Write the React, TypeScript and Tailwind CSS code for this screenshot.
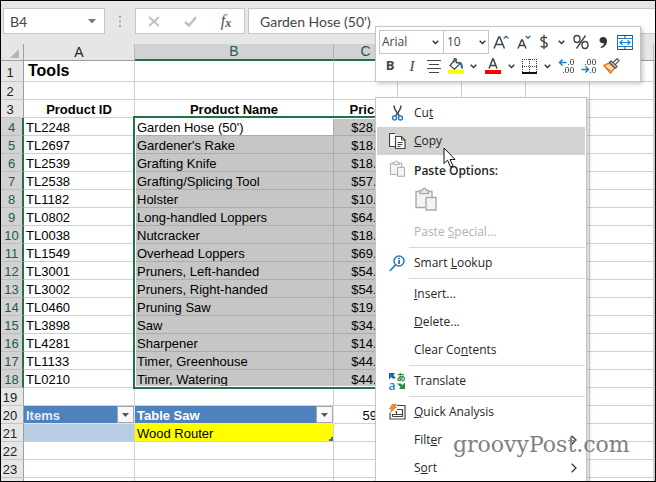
import type { ReactNode } from "react";

const products: [string, string, string][] = [
  ["TL2248", "Garden Hose (50')", "$28.00"],
  ["TL2697", "Gardener's Rake", "$18.00"],
  ["TL2539", "Grafting Knife", "$18.00"],
  ["TL2538", "Grafting/Splicing Tool", "$57.00"],
  ["TL1182", "Holster", "$10.00"],
  ["TL0802", "Long-handled Loppers", "$64.00"],
  ["TL0038", "Nutcracker", "$18.00"],
  ["TL1549", "Overhead Loppers", "$69.00"],
  ["TL3001", "Pruners, Left-handed", "$54.00"],
  ["TL3002", "Pruners, Right-handed", "$54.00"],
  ["TL0460", "Pruning Saw", "$19.00"],
  ["TL3898", "Saw", "$34.00"],
  ["TL4281", "Sharpener", "$14.00"],
  ["TL1133", "Timer, Greenhouse", "$44.00"],
  ["TL0210", "Timer, Watering", "$44.00"],
];

const cell = "border-r border-b border-[#d0d0d0] p-0 px-[2px] pt-[2px] whitespace-nowrap overflow-hidden";

function Blank({ count }: { count: number }) {
  return (
    <>
      {Array.from({ length: count }, (_, i) => (
        <td key={i} className={cell} />
      ))}
    </>
  );
}

function RowHead({ n, selected = false }: { n?: number; selected?: boolean }) {
  return (
    <th
      scope="row"
      className={
        selected
          ? "border-r-2 border-b border-r-[#217346] border-b-[#bdbdbd] bg-[#d2d2d2] p-0 pt-[2px] text-center font-normal text-[#215c4a]"
          : "border-r border-b border-r-[#9e9e9e] border-b-[#c4c4c4] bg-[#e6e6e6] p-0 pt-[2px] pr-1 text-center font-normal text-[#222]"
      }
    >
      {n}
    </th>
  );
}

function ColHead({ label, selected = false }: { label: string; selected?: boolean }) {
  return (
    <th
      scope="col"
      className={
        selected
          ? "border-r border-b-2 border-r-[#b0b0b0] border-b-[#217346] bg-[#d2d2d2] p-0 text-center text-[14px] leading-[15px] font-normal text-[#215c4a]"
          : "border-r border-b border-r-[#b8b8b8] border-b-[#9e9e9e] bg-[#e6e6e6] p-0 text-center text-[14px] leading-[15px] font-normal text-[#222]"
      }
    >
      {label}
    </th>
  );
}

function FilterButton({ label }: { label: string }) {
  return (
    <button
      type="button"
      aria-label={label}
      className="flex size-[17px] items-center justify-center border border-[#a6a6a6] bg-[#f8f8f8]"
    >
      <svg width="7" height="4" viewBox="0 0 7 4">
        <path d="M0 0h7L3.5 4z" fill="#555" />
      </svg>
    </button>
  );
}

function Sheet() {
  return (
    <div className="relative">
      <table className="w-full table-fixed border-separate border-spacing-0 text-[13px] leading-[15px] text-black">
        <colgroup>
          <col className="w-[23px]" />
          <col className="w-[111px]" />
          <col className="w-[199px]" />
          <col className="w-[64px]" />
          <col className="w-[64px]" />
          <col className="w-[64px]" />
          <col className="w-[64px]" />
          <col className="w-[64px]" />
          <col />
        </colgroup>
        <thead>
          <tr className="h-[17px]">
            <td className="border-r border-b border-[#9e9e9e] bg-[#e6e6e6] p-0">
              <svg width="19" height="14" viewBox="0 0 19 14">
                <path d="M18 4v9H9z" fill="#b5b5b5" />
              </svg>
            </td>
            <ColHead label="A" />
            <ColHead label="B" selected />
            <ColHead label="C" selected />
            <ColHead label="D" />
            <ColHead label="E" />
            <ColHead label="F" />
            <ColHead label="G" />
            <td className="border-b border-[#9e9e9e] bg-[#e6e6e6] p-0" />
          </tr>
        </thead>
        <tbody>
          <tr className="h-[21px]">
            <RowHead n={1} />
            <td className="overflow-hidden border-r border-b border-[#d0d0d0] p-0 pl-1 text-[16px] leading-5 font-bold whitespace-nowrap">
              Tools
            </td>
            <Blank count={7} />
          </tr>
          <tr className="h-[18px]">
            <RowHead n={2} />
            <Blank count={8} />
          </tr>
          <tr className="h-[18px]">
            <RowHead n={3} />
            <td className={`${cell} text-center font-bold`}>Product ID</td>
            <td className={`${cell} text-center font-bold`}>Product Name</td>
            <td className={`${cell} text-center font-bold`}>Price</td>
            <Blank count={5} />
          </tr>
          {products.map(([id, name, price], i) => (
            <tr key={id} className="h-[18px]">
              <RowHead n={i + 4} selected />
              <td className={cell}>{id}</td>
              <td
                className={
                  i === 0
                    ? "overflow-hidden border-r border-b border-[#acacac] p-0 px-[2px] pt-[2px] whitespace-nowrap"
                    : "overflow-hidden border-r border-b border-[#acacac] bg-[#c6c6c6] p-0 px-[2px] pt-[2px] whitespace-nowrap"
                }
              >
                {name}
              </td>
              <td className="overflow-hidden border-r border-b border-[#acacac] bg-[#c6c6c6] p-0 pt-[2px] pr-[6px] text-right whitespace-nowrap">
                {price}
              </td>
              <Blank count={5} />
            </tr>
          ))}
          <tr className="h-[18px]">
            <RowHead n={19} />
            <Blank count={8} />
          </tr>
          <tr className="h-[18px]">
            <RowHead n={20} />
            <td className="border-r border-b border-[#dce6f1] bg-[#4f81bd] p-0 pl-[2px] font-bold text-[#e3eefb]">
              <div className="flex items-end justify-between">
                Items
                <FilterButton label="Filter Items" />
              </div>
            </td>
            <td className="border-r border-b border-[#dce6f1] bg-[#4f81bd] p-0 pl-[2px] font-bold text-white">
              <div className="flex items-end justify-between">
                Table Saw
                <FilterButton label="Filter Table Saw" />
              </div>
            </td>
            <td className={`${cell} text-right`}>59.99</td>
            <Blank count={5} />
          </tr>
          <tr className="h-[18px]">
            <RowHead n={21} />
            <td className="border-r border-b border-[#d0d0d0] bg-[#b8cce4] p-0" />
            <td className="border-r border-b border-[#d0d0d0] bg-[#ffff00] p-0 pt-[2px] pl-[2px]">
              <div className="flex items-end justify-between">
                Wood Router
                <svg width="4" height="4" viewBox="0 0 4 4">
                  <path d="M4 0v4H0V2h2V0z" fill="#4a66ac" />
                </svg>
              </div>
            </td>
            <Blank count={6} />
          </tr>
          {[22, 23].map((n) => (
            <tr key={n} className="h-[18px]">
              <RowHead n={n} />
              <Blank count={8} />
            </tr>
          ))}
          <tr className="h-[18px]">
            <RowHead />
            <Blank count={8} />
          </tr>
        </tbody>
      </table>
      {/* selection frame around B4:C18 */}
      <div className="pointer-events-none absolute top-[72px] left-[132px] h-[273px] w-[266px] border-2 border-[#217346] shadow-[inset_0_0_0_1px_white]" />
    </div>
  );
}

function FormulaBar() {
  return (
    <div className="flex h-[43px] shrink-0 items-start bg-[#e6e6e6] pt-[7px] pl-[2px] text-[14px] text-[#444]">
      <div className="flex h-[26px] w-[102px] items-center border border-[#c6c6c6] bg-white pr-2">
        <input
          aria-label="Name box"
          defaultValue="B4"
          className="w-full min-w-0 bg-transparent pl-[6px] font-[Lato,sans-serif] outline-none"
        />
        <button type="button" aria-label="Open name list">
          <svg width="8" height="5" viewBox="0 0 8 5">
            <path d="M0 0h8L4 4.500z" fill="#777" />
          </svg>
        </button>
      </div>
      <div className="flex h-[26px] w-[30px] items-center justify-center">
        <svg width="2" height="11" viewBox="0 0 2 11" fill="#aaa">
          <path d="M0 0h2v2H0zM0 4.500h2v2H0zM0 9h2v2H0z" />
        </svg>
      </div>
      <div className="flex h-[26px] w-[110px] items-center border border-[#c6c6c6] bg-white">
        <button type="button" aria-label="Cancel" className="flex w-9 justify-center">
          <svg width="12" height="11" viewBox="0 0 12 11" fill="none" stroke="#c0c0c0" strokeWidth="2">
            <path d="M1 1l10 9M11 1L1 10" />
          </svg>
        </button>
        <button type="button" aria-label="Enter" className="flex w-9 justify-center">
          <svg width="13" height="11" viewBox="0 0 13 11" fill="none" stroke="#c0c0c0" strokeWidth="2.500">
            <path d="M1 6l4 3.500L12 1" />
          </svg>
        </button>
        <button
          type="button"
          aria-label="Insert function"
          className="flex w-9 items-center justify-center font-[Liberation_Serif,serif] leading-4 text-[#555] italic"
        >
          <span className="text-[16px]">f</span>
          <span className="pt-1 text-[12px] font-bold">x</span>
        </button>
      </div>
      <input
        aria-label="Formula"
        defaultValue="Garden Hose (50')"
        className="ml-[3px] h-[26px] min-w-0 flex-1 border border-r-0 border-[#c6c6c6] bg-white pl-[11px] font-[Lato,sans-serif] outline-none"
      />
    </div>
  );
}

function Chevron() {
  return (
    <svg width="7" height="5" viewBox="0 0 7 5" fill="none" stroke="#333" strokeWidth="1.400">
      <path d="M0.700 0.800l2.800 2.800L6.300 0.800" />
    </svg>
  );
}

function Tool({ label, size, children }: { label: string; size: string; children: ReactNode }) {
  return (
    <button type="button" aria-label={label} className={`flex h-6 shrink-0 items-center justify-center ${size}`}>
      {children}
    </button>
  );
}

function MiniToolbar() {
  return (
    <div
      role="toolbar"
      aria-label="Formatting"
      className="absolute top-[25px] left-[374px] z-10 h-[56px] w-[266px] border border-[#c6c6c6] bg-white pt-[3px] pl-[3px] font-[Open_Sans,sans-serif] text-[12px] text-[#444] shadow-[2px_2px_4px_rgba(0,0,0,0.2)]"
    >
      <div className="flex">
        <div className="relative h-6 w-[65px] border border-[#c6c6c6]">
          <select aria-label="Font" className="size-full appearance-none bg-white pl-[2px] leading-4">
            <option>Arial</option>
          </select>
          <span className="pointer-events-none absolute top-[9px] right-1">
            <Chevron />
          </span>
        </div>
        <div className="relative h-6 w-[45px] border border-l-0 border-[#c6c6c6]">
          <select aria-label="Font size" className="size-full appearance-none bg-white pl-[3px] leading-4">
            <option>10</option>
          </select>
          <span className="pointer-events-none absolute top-[9px] right-[2px]">
            <Chevron />
          </span>
        </div>
        <Tool label="Increase font size" size="w-6">
          <svg width="16" height="16" viewBox="0 0 16 16" fill="none">
            <path d="M1 14.500L5.800 3h.9l4.800 11.500M2.800 10.500h7" stroke="#444" strokeWidth="1.500" />
            <path d="M10.700 4.500L13 2.200l2.300 2.300" stroke="#1e7fc8" strokeWidth="1.500" />
          </svg>
        </Tool>
        <Tool label="Decrease font size" size="w-[22px]">
          <svg width="14" height="16" viewBox="0 0 14 16" fill="none">
            <path d="M1 14.500L4.600 6h.8L9 14.500M2.500 11.500h5" stroke="#444" strokeWidth="1.500" />
            <path d="M8.700 2L11 4.300 13.300 2" stroke="#1e7fc8" strokeWidth="1.500" />
          </svg>
        </Tool>
        <Tool label="Accounting format" size="w-[18px]">
          <svg width="8" height="16" viewBox="0 0 8 16" fill="none" stroke="#444" strokeWidth="1.400">
            <path d="M7 4C6 3 1 2.300 1 5.200 1 8.300 7.200 7.300 7.200 10.700c0 3.200-5.200 2.800-6.400 1.300M4 .8v14.400" />
          </svg>
        </Tool>
        <Tool label="Accounting options" size="w-4">
          <Chevron />
        </Tool>
        <Tool label="Percent style" size="w-6">
          <svg width="16" height="16" viewBox="0 0 16 16" fill="none" stroke="#444" strokeWidth="1.400">
            <ellipse cx="4" cy="5" rx="3" ry="3.500" />
            <ellipse cx="12" cy="11" rx="3" ry="3.500" />
            <path d="M12.500 1.500l-9 13" />
          </svg>
        </Tool>
        <Tool label="Comma style" size="w-5">
          <svg width="8" height="13" viewBox="0 0 8 13">
            <path d="M4 1c2.500 0 4 1.500 4 4 0 3.500-2.500 6.500-6 7l-.4-1C3.500 10.300 5 9 5 7 2.500 8 .5 6 .5 4.200S2 1 4 1z" fill="#333" />
          </svg>
        </Tool>
        <Tool label="Merge and center" size="w-6">
          <svg width="16" height="15" viewBox="0 0 16 15" fill="none">
            <path d="M.5 3.500v-3h15v3M8 .5v3M.5 11.500v3h15v-3M8 11.500v3" stroke="#444" />
            <path d="M.5 3.500h15v8H.5z" stroke="#1e7fc8" />
            <path d="M3 7.500h10M5.500 5.200L3 7.500l2.500 2.300M10.500 5.200L13 7.500l-2.500 2.300" stroke="#1e7fc8" strokeWidth="1.200" />
          </svg>
        </Tool>
      </div>
      <div className="flex">
        <Tool label="Bold" size="w-[22px]">
          <b className="text-[13px]">B</b>
        </Tool>
        <Tool label="Italic" size="w-[22px]">
          <i className="font-[Liberation_Serif,serif] text-[15px]">I</i>
        </Tool>
        <Tool label="Center" size="w-[22px]">
          <svg width="14" height="13" viewBox="0 0 14 13" stroke="#444">
            <path d="M0 .5h14M2 4.500h10M0 8.500h14M2 12.500h10" />
          </svg>
        </Tool>
        <Tool label="Fill color" size="w-[22px]">
          <svg width="16" height="17" viewBox="0 0 16 17" fill="none">
            <path d="M6.500 2L2 7.500l4.500 3.700L11.500 6zM6 4.500V1.300C6 .3 8.300.3 8.300 1.500v4" stroke="#444" strokeWidth="1.200" />
            <path d="M10.500 5.500c1-1.500 3.500-1 3.500 5" stroke="#1e6fa8" strokeWidth="2" />
            <path d="M0 12h16v4H0z" fill="#ffff00" />
          </svg>
        </Tool>
        <Tool label="Fill color options" size="w-3">
          <Chevron />
        </Tool>
        <Tool label="Font color" size="w-7">
          <svg width="16" height="17" viewBox="0 0 16 17" fill="none">
            <path d="M4 10.500L7.700 1h.6L12 10.500M5.300 7.500h5.400" stroke="#444" strokeWidth="1.500" />
            <path d="M0 12h16v4H0z" fill="#ff0000" />
          </svg>
        </Tool>
        <Tool label="Font color options" size="w-2">
          <Chevron />
        </Tool>
        <Tool label="Borders" size="w-7">
          <svg width="15" height="15" viewBox="0 0 15 15" stroke="#444" fill="none">
            <path d="M0 .5h15M.5 0v13M7.500 0v13M14.500 0v13M0 7.500h15" strokeDasharray="1 1" />
            <path d="M0 14h15" stroke="#111" strokeWidth="2" />
          </svg>
        </Tool>
        <Tool label="Border options" size="w-2">
          <Chevron />
        </Tool>
        <div className="ml-[6px] flex gap-[2px]">
          <Tool label="Increase decimal" size="w-5">
            <svg width="18" height="16" viewBox="0 0 18 16" fill="none" stroke="#555">
              <path d="M1.500 4.500h7M4.500 1.500l-3 3 3 3" stroke="#1e7fc8" strokeWidth="1.500" />
              <rect x="12.500" y="1.500" width="3" height="5" rx="1" />
              <rect x="7.500" y="9.500" width="3" height="5" rx="1" />
              <rect x="12.500" y="9.500" width="3" height="5" rx="1" />
              <path d="M10 6.500h1M5 14.500h1" />
            </svg>
          </Tool>
          <Tool label="Decrease decimal" size="w-5">
            <svg width="18" height="16" viewBox="0 0 18 16" fill="none" stroke="#555">
              <path d="M1.500 11.500h7M5.500 8.500l3 3-3 3" stroke="#1e7fc8" strokeWidth="1.500" />
              <rect x="7.500" y="1.500" width="3" height="5" rx="1" />
              <rect x="12.500" y="1.500" width="3" height="5" rx="1" />
              <rect x="12.500" y="9.500" width="3" height="5" rx="1" />
              <path d="M5 6.500h1M10 14.500h1" />
            </svg>
          </Tool>
          <Tool label="Format painter" size="w-5">
            <svg width="17" height="16" viewBox="0 0 17 16" fill="none">
              <path d="M1 7.500l5-2.500 5.500 5L7.500 15z" fill="#f9d9b5" stroke="#e07b1a" strokeWidth="1.400" />
              <path d="M3 9.500l4.500 3.500" stroke="#e07b1a" strokeWidth="1.200" />
              <path d="M6.500 4.500L8 3l6 5.500-1.500 1.500zM10 4.500L14 .8l2 1.800-3.700 4" fill="#fff" stroke="#555" strokeWidth="1.300" />
            </svg>
          </Tool>
        </div>
      </div>
    </div>
  );
}

function CutIcon() {
  return (
    <svg width="11" height="16" viewBox="0 0 11 16" fill="none">
      <path d="M2 .5c0 3 1 5 5.500 10.500M9 .5c0 3-1 5-5.500 10.500" stroke="#444" strokeWidth="1.500" />
      <circle cx="2.500" cy="13" r="2" stroke="#1e7fc8" strokeWidth="1.400" />
      <circle cx="8.500" cy="13" r="2" stroke="#1e7fc8" strokeWidth="1.400" />
    </svg>
  );
}

function CopyIcon() {
  return (
    <svg width="17" height="16" viewBox="0 0 17 16" fill="#fff" stroke="#444">
      <path d="M6 13.500H.5V.5H6" strokeWidth="1.200" />
      <path d="M6.500 3.500h6l3.500 3.500v8.500H6.500z" strokeWidth="1.200" />
      <path d="M12.500 3.500V7H16M8.500 9.500h5M8.500 11.500h5M8.500 13.500h3" fill="none" />
    </svg>
  );
}

function PasteIcon({ size }: { size: number }) {
  return (
    <svg width={size} height={size} viewBox="0 0 22 24" fill="#f4f4f4" stroke="#aaa" strokeWidth="1.400">
      <path d="M10 20.500H1V4.500h16v6" />
      <path d="M5 6.500V3.500h2.500C7.500.5 11 .5 11 3.500h2.500v3z" />
      <path d="M11 10.500h10v12.500H11z" />
    </svg>
  );
}

function LookupIcon() {
  return (
    <svg width="16" height="17" viewBox="0 0 16 17" fill="none">
      <circle cx="10" cy="6" r="5" stroke="#1e7fc8" strokeWidth="1.500" />
      <path d="M6.500 9.800L.8 16" stroke="#1e7fc8" strokeWidth="1.700" />
      <path d="M10 5v4M10 2.800v1.300" stroke="#333" strokeWidth="1.400" />
    </svg>
  );
}

function TranslateIcon() {
  return (
    <span className="grid w-[17px] grid-cols-[8px_9px]" aria-hidden>
      <svg width="7" height="7" viewBox="0 0 7 7">
        <path d="M0 0h6L4.500 2 7 5.500H3.500L2.500 4 0 6.500z" fill="#1668b5" />
      </svg>
      <span className="font-[Noto_Sans_CJK_JP,sans-serif] text-[9px] leading-[9px] font-bold text-[#2e8b3d]">あ</span>
      <span className="font-[Open_Sans,sans-serif] text-[12px] leading-[8px] font-semibold text-[#1e7fc8]">a</span>
      <svg width="8" height="7" viewBox="0 0 8 7">
        <path d="M8 7H2l1.500-2L0 1.500h4L5.500 3 8 .5z" fill="#2e8b3d" />
      </svg>
    </span>
  );
}

function QuickIcon() {
  return (
    <svg width="17" height="16" viewBox="0 0 17 16" fill="none" stroke="#444" strokeWidth="1.200">
      <path d="M8 1.500h8v13.500H1V9" />
      <path d="M3.500 12.500v-2h4v-3h-1M8 5.500h5.500v7h-10M8 10.500h5" />
      <path d="M3.500 0h4L5.500 3h2L1.500 8.500 3 5H.5z" fill="#f0912d" stroke="#c8660f" strokeWidth=".6" />
    </svg>
  );
}

function MenuItem({
  icon,
  children,
  tone = "text-[#262626]",
  submenu = false,
  disabled = false,
}: {
  icon?: ReactNode;
  children: ReactNode;
  tone?: string;
  submenu?: boolean;
  disabled?: boolean;
}) {
  return (
    <button
      type="button"
      role="menuitem"
      disabled={disabled}
      className={`flex h-7 w-full shrink-0 items-center text-left ${tone}`}
    >
      <span className="flex w-[37px] items-center justify-center pl-[3px]">{icon}</span>
      <span className="flex-1">{children}</span>
      {submenu && (
        <svg width="6" height="10" viewBox="0 0 6 10" fill="none" stroke="#333" strokeWidth="1.300" className="mr-2">
          <path d="M.7.7L5 5 .7 9.300" />
        </svg>
      )}
    </button>
  );
}

function Divider() {
  return <hr className="my-px ml-8 shrink-0 border-[#d9d9d9]" />;
}

function ContextMenu() {
  return (
    <div
      role="menu"
      className="absolute top-[96px] bottom-[-4px] left-[374px] z-10 flex w-[212px] flex-col border border-[#c6c6c6] bg-white p-px font-[Open_Sans,sans-serif] text-[12px] leading-4 shadow-[2px_2px_4px_rgba(0,0,0,0.2)]"
    >
      <MenuItem icon={<CutIcon />}>
        Cu<u>t</u>
      </MenuItem>
      <MenuItem icon={<CopyIcon />} tone="bg-[#d2d2d0] text-[#262626]">
        <u>C</u>opy
      </MenuItem>
      <div className="flex h-8 shrink-0 items-center font-semibold text-[#262626]">
        <span className="flex w-[37px] justify-center self-start pt-[5px] pl-1">
          <PasteIcon size={17} />
        </span>
        Paste Options:
      </div>
      <div className="flex h-[31px] shrink-0 pl-[37px]">
        <button type="button" aria-label="Paste" className="flex size-6 items-center justify-center">
          <PasteIcon size={24} />
        </button>
      </div>
      <MenuItem tone="text-[#b1b1b1]" disabled>
        Paste <u>S</u>pecial...
      </MenuItem>
      <Divider />
      <MenuItem icon={<LookupIcon />}>
        Smart <u>L</u>ookup
      </MenuItem>
      <Divider />
      <MenuItem>
        <u>I</u>nsert...
      </MenuItem>
      <MenuItem>
        <u>D</u>elete...
      </MenuItem>
      <MenuItem>
        Clear Co<u>n</u>tents
      </MenuItem>
      <Divider />
      <MenuItem icon={<TranslateIcon />}>Translate</MenuItem>
      <Divider />
      <MenuItem icon={<QuickIcon />}>
        <u>Q</u>uick Analysis
      </MenuItem>
      <MenuItem submenu>
        Filt<u>e</u>r
      </MenuItem>
      <MenuItem submenu>
        S<u>o</u>rt
      </MenuItem>
    </div>
  );
}

export default function App() {
  return (
    <div className="relative flex h-screen w-full flex-col overflow-hidden border border-black bg-white font-[Liberation_Sans,Arial,sans-serif]">
      <FormulaBar />
      <Sheet />
      <MiniToolbar />
      <ContextMenu />
      <svg
        width="13"
        height="21"
        viewBox="0 0 13 21"
        className="pointer-events-none absolute top-[146px] left-[442px] z-20"
      >
        <path d="M1 1v15.500l3.500-3.300 3 6.800 2.500-1.200-3-6.300h5z" fill="#fff" stroke="#111" />
      </svg>
      <div className="pointer-events-none absolute top-[428px] left-[452px] z-20 font-[DejaVu_Serif,serif] text-[22px] leading-8 text-[#808080]">
        groovyPost.com
      </div>
    </div>
  );
}
